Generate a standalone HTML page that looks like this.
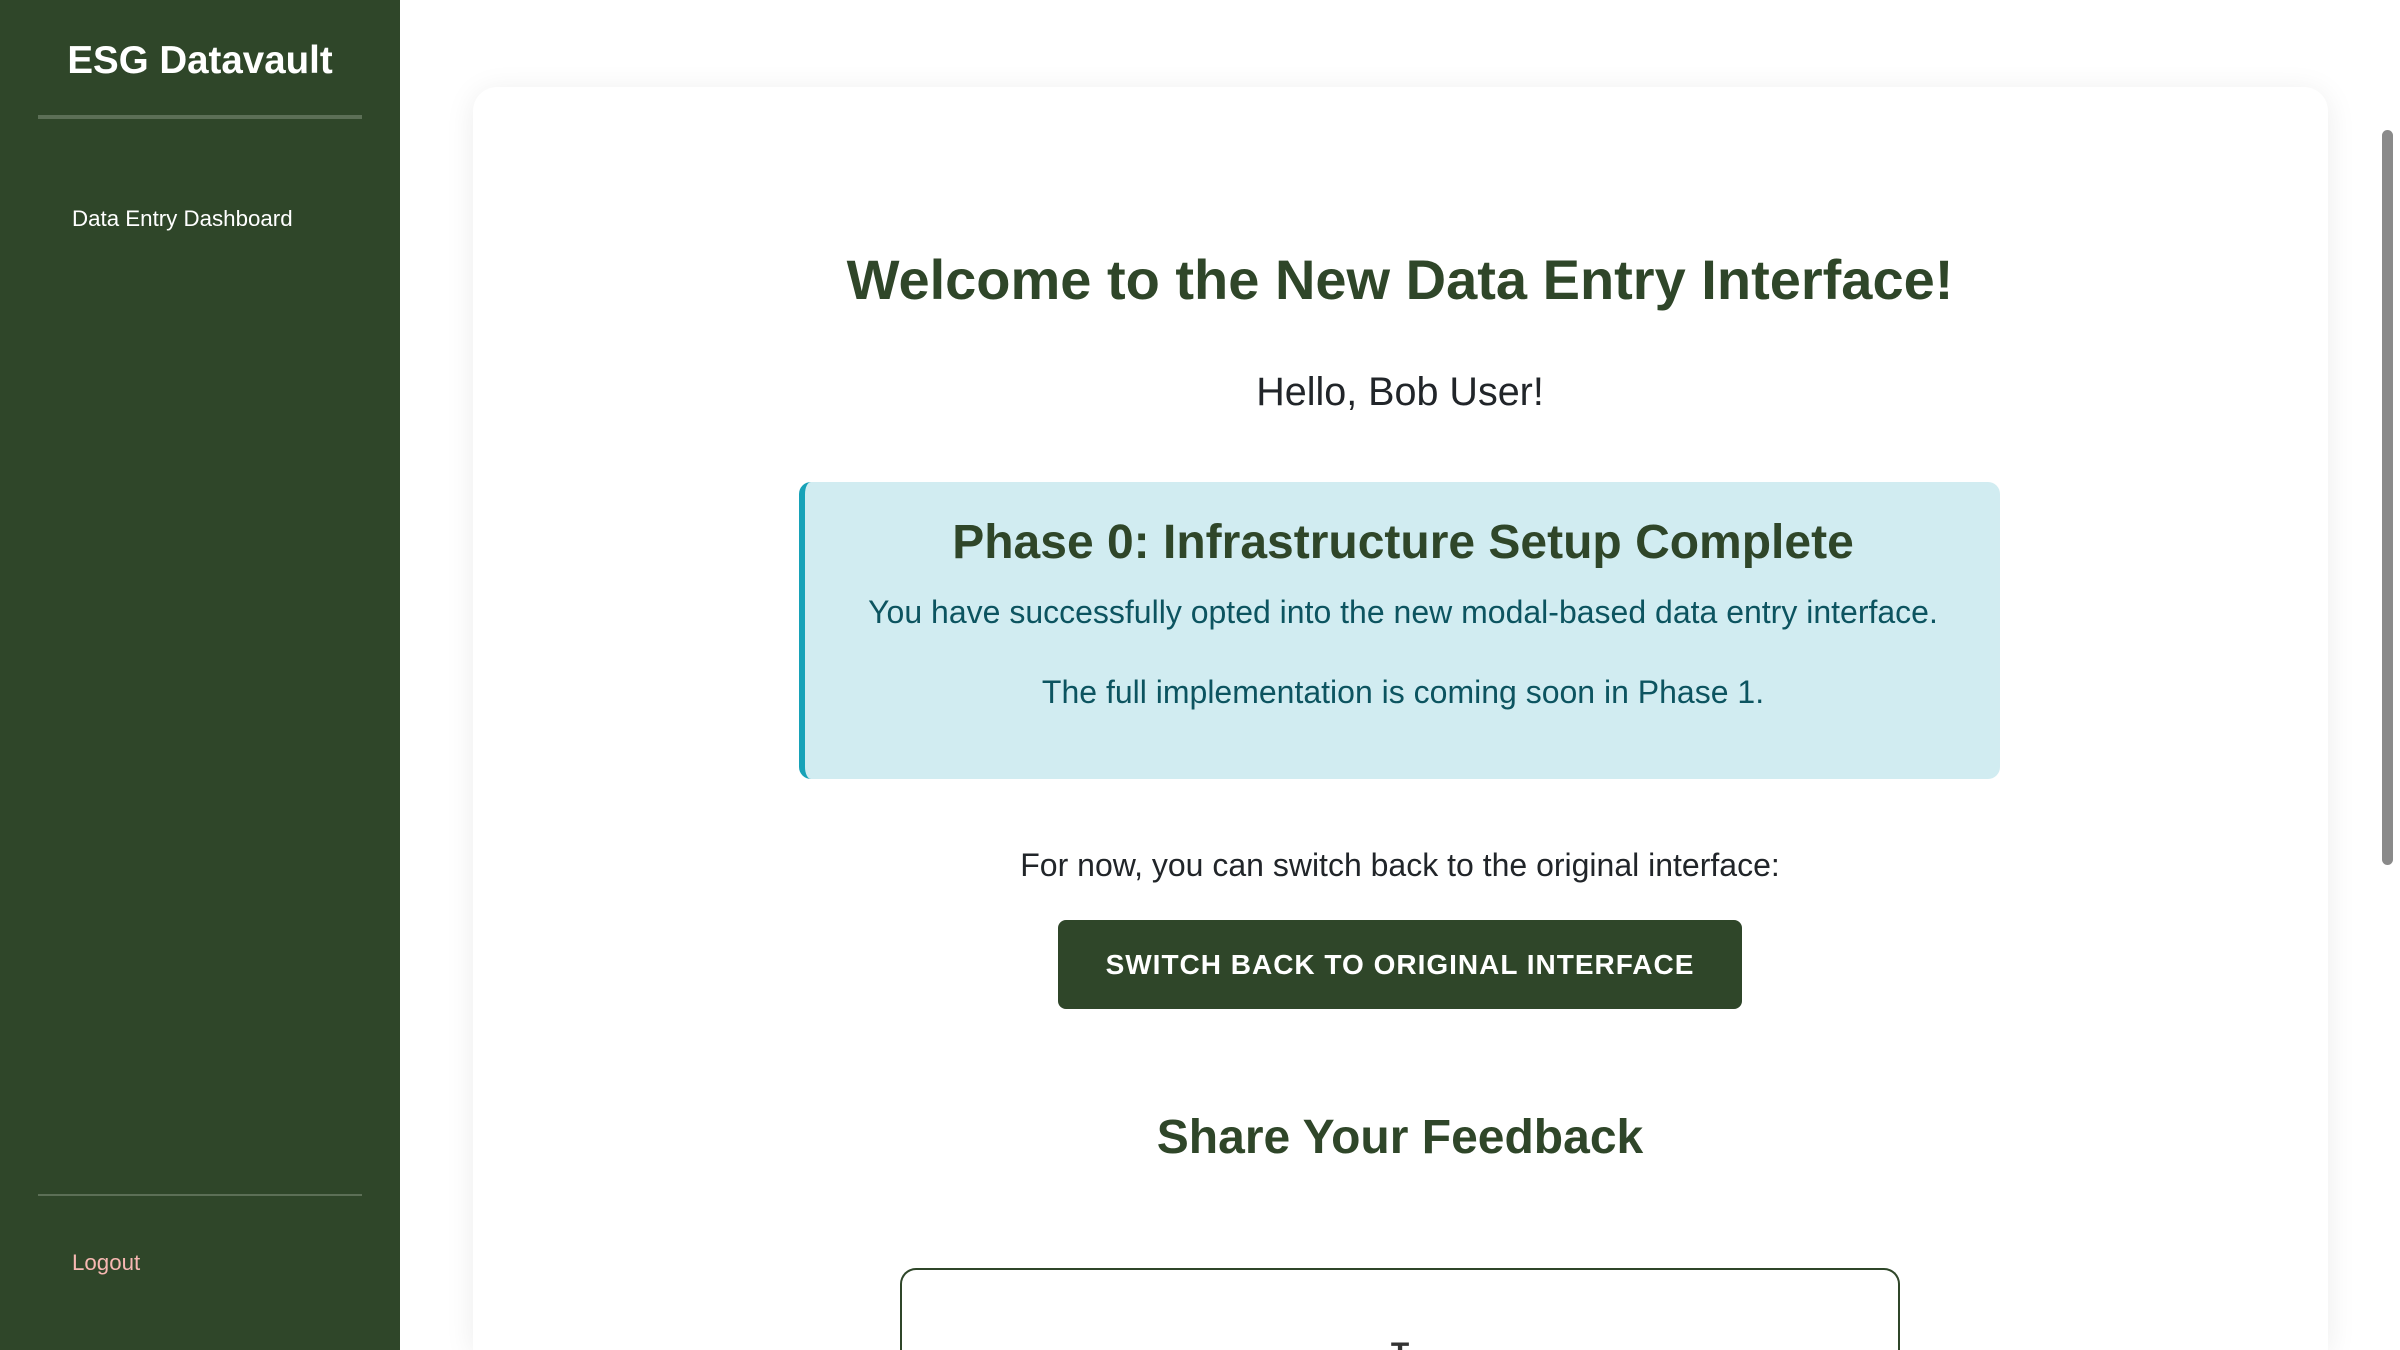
<!DOCTYPE html>
<html><head><meta charset="utf-8"><style>
html,body{margin:0;padding:0;width:2400px;height:1350px;overflow:hidden;background:#fff;font-family:"Liberation Sans",Arial,sans-serif;}
.wrap{position:absolute;left:0;top:0;width:2400px;height:1350px;overflow:hidden;}
.sb{position:absolute;left:0;top:0;width:400px;height:1350px;background:#2f4629;}
.sb h1{position:absolute;left:0;width:400px;top:36px;margin:0;text-align:center;color:#fff;font-size:38.5px;font-weight:bold;line-height:50px;}
.line1{position:absolute;left:38px;width:324px;top:115px;height:4px;background:#5c6f56;}
.line2{position:absolute;left:38px;width:324px;top:1194px;height:2px;background:#5c6f56;}
.nav{position:absolute;left:72px;top:205px;color:#fff;font-size:22.3px;line-height:28px;}
.logout{position:absolute;left:72px;top:1249px;color:#f7b8b2;font-size:22.3px;line-height:28px;}
.card{position:absolute;left:473px;top:87px;width:1855px;height:1263px;background:#fff;border-radius:24px 24px 0 0;box-shadow:0 4px 30px rgba(0,0,0,0.08);}
.c{position:absolute;left:0;width:2800px;text-align:center;}
.scroll{position:absolute;left:2382px;top:130px;width:11px;height:735px;background:#8a8a8a;border-radius:6px;}
.alert{position:absolute;left:799px;top:482px;width:1195px;height:297px;background:#d1ecf1;border-left:6px solid #17a2b8;border-radius:12px;}
.btn{position:absolute;left:1058px;top:920px;width:684px;height:89px;background:#2f4629;border-radius:8px;color:#fff;font-weight:bold;font-size:28px;letter-spacing:1px;text-align:center;line-height:89px;}
.fb{position:absolute;left:900px;top:1268px;width:996px;height:80px;border:2px solid #2f4629;border-bottom:none;border-radius:16px 16px 0 0;overflow:hidden;}
.fb span{position:absolute;left:0;width:996px;top:64px;text-align:center;font-size:30px;font-weight:bold;color:#333;line-height:40px;}
</style></head><body><div class="wrap">
<div class="sb">
<h1>ESG Datavault</h1>
<div class="line1"></div>
<div class="nav">Data Entry Dashboard</div>
<div class="line2"></div>
<div class="logout">Logout</div>
</div>
<div class="card"></div>
<div class="c" style="top:245px;font-size:56px;font-weight:bold;color:#2f4629;line-height:70px;">Welcome to the New Data Entry Interface!</div>
<div class="c" style="top:366px;font-size:39.5px;color:#212529;line-height:52px;">Hello, Bob User!</div>
<div class="alert"></div>
<div class="c" style="top:514px;left:3px;font-size:48px;font-weight:bold;color:#2f4629;line-height:58px;">Phase 0: Infrastructure Setup Complete</div>
<div class="c" style="top:592px;left:3px;font-size:32px;color:#0c5460;line-height:40px;">You have successfully opted into the new modal-based data entry interface.</div>
<div class="c" style="top:672px;left:3px;font-size:32px;color:#0c5460;line-height:40px;">The full implementation is coming soon in Phase 1.</div>
<div class="c" style="top:845px;font-size:32px;color:#212529;line-height:40px;">For now, you can switch back to the original interface:</div>
<div class="btn">SWITCH BACK TO ORIGINAL INTERFACE</div>
<div class="c" style="top:1108px;font-size:48px;font-weight:bold;color:#2f4629;line-height:60px;">Share Your Feedback</div>
<div class="fb"><span>T</span></div>
<div class="scroll"></div>
</div></body></html>
